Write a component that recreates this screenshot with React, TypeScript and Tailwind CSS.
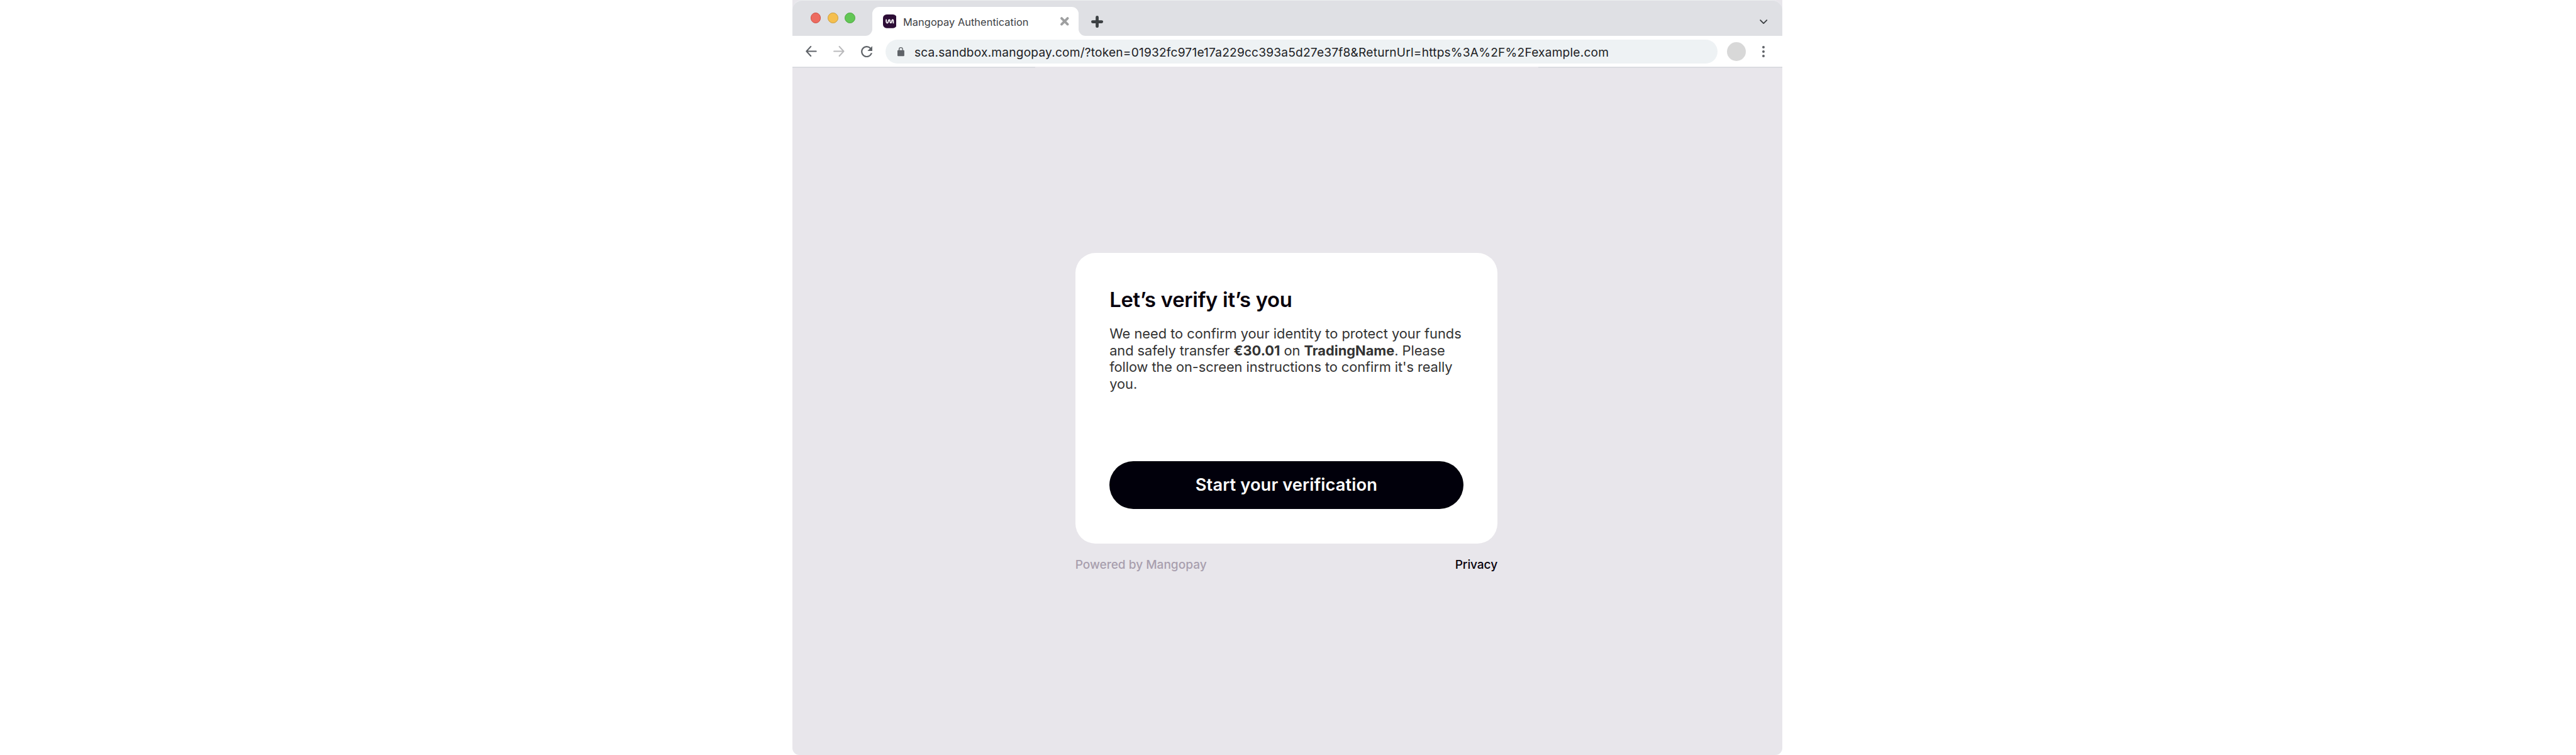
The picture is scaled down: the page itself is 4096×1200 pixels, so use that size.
import React from "react";

function TabStrip() {
  return (
    <div className="flex h-[57.3px] w-full shrink-0 rounded-t-[16px] border-t border-[#eceef0] bg-[#dfe0e4]">
      <div className="mt-[18.5px] ml-[28.7px] flex h-[18px] w-[98.3px] items-center gap-[10.9px]">
        <span className="h-[16.4px] w-[16.4px] rounded-full border border-[#ce5347] bg-[#ed6b60]" />
        <span className="h-[16.4px] w-[16.4px] rounded-full border border-[#c99e3f] bg-[#f5bf4f]" />
        <span className="h-[16.4px] w-[16.4px] rounded-full border border-[#4ea73f] bg-[#62c655]" />
      </div>
      <div className="relative mt-[9.9px] flex h-[46.4px] w-[327.7px] items-center rounded-t-[11px] bg-white pl-[16.4px]">
        <svg className="absolute bottom-0 -left-[10.9px] h-[10.9px] w-[11px]" viewBox="0 0 16 16" preserveAspectRatio="none">
          <path d="M16 0V16H0A16 16 0 0 0 16 0Z" fill="#fff" />
        </svg>
        <svg className="absolute -right-[10.9px] bottom-0 h-[10.9px] w-[11px]" viewBox="0 0 16 16" preserveAspectRatio="none">
          <path d="M0 0V16H16A16 16 0 0 1 0 0Z" fill="#fff" />
        </svg>
        <svg className="h-[21.8px] w-[21.8px] shrink-0" viewBox="0 0 32 32" fill="none">
          <rect width="32" height="32" rx="8.5" fill="#2d0d36" />
          <path
            d="M7.6 11.2V16.4C7.6 20.6 11.1 21 12 17.6L12.8 14.4C13.6 11.4 16.4 11.5 16.4 14.6V16.6C16.4 20.4 19.2 20.7 20 17.6L20.8 14.4C21.6 11.3 24.1 11.5 24.1 15V20.8"
            stroke="#fff"
            strokeWidth="2.6"
          />
        </svg>
        <span className="mt-[1.8px] ml-[10.7px] w-[250px] text-[16.38px] leading-[20px] tracking-[0.05px] whitespace-nowrap text-[#3c4043]">
          Mangopay Authentication
        </span>
        <svg className="absolute top-[16.4px] left-[299px] h-[13.6px] w-[13.6px]" viewBox="0 0 20 20">
          <path d="M3 3L17 17M17 3L3 17" stroke="#9e9fa0" strokeWidth="5.6" strokeLinecap="round" />
        </svg>
      </div>
      <svg className="mt-[23.6px] ml-[20.6px] h-[19.1px] w-[19.1px]" viewBox="0 0 28 28">
        <path d="M14 3.5V24.5M3.5 14H24.5" stroke="#3c4043" strokeWidth="7" strokeLinecap="round" />
      </svg>
      <svg className="mt-[29.6px] mr-[23.8px] ml-auto h-[7.5px] w-[12.4px]" viewBox="0 0 18 11" fill="none">
        <path d="M1.6 1.6L9 9L16.4 1.6" stroke="#3c4043" strokeWidth="2.7" strokeLinecap="round" />
      </svg>
    </div>
  );
}

function Toolbar() {
  return (
    <div className="flex h-[49.2px] w-full shrink-0 items-center bg-white">
      <svg className="ml-[21.3px] h-[17px] w-[17.8px]" viewBox="0 0 26 25" fill="none">
        <path d="M12 1.5L1.8 12.5L12 23.5M2 12.5H24.5" stroke="#5f6368" strokeWidth="2.9" strokeLinecap="round" strokeLinejoin="round" />
      </svg>
      <svg className="ml-[25.7px] h-[17px] w-[17.8px]" viewBox="0 0 26 25" fill="none">
        <path d="M14 1.5L24.2 12.5L14 23.5M24 12.5H1.5" stroke="#bababc" strokeWidth="2.9" strokeLinecap="round" strokeLinejoin="round" />
      </svg>
      <svg className="ml-[25.9px] h-[18.2px] w-[18.4px]" viewBox="4 4 16 16">
        <path
          d="M17.65 6.35A7.958 7.958 0 0 0 12 4c-4.42 0-7.99 3.58-7.99 8s3.57 8 7.99 8c3.73 0 6.84-2.55 7.73-6h-2.08A5.99 5.99 0 0 1 12 18c-3.31 0-6-2.69-6-6s2.69-6 6-6c1.66 0 3.14.69 4.22 1.78L13 11h7V4l-2.35 2.35z"
          fill="#5f6368"
        />
      </svg>
      <div className="ml-[20.5px] flex h-[38.2px] w-[1323px] items-center rounded-full bg-[#eef2f4] pl-[19.1px]">
        <svg className="mt-[1px] h-[14.4px] w-[10.9px] shrink-0" viewBox="0 0 16 21" fill="none">
          <path d="M3.9 9V5A4.1 4.1 0 0 1 12.1 5V9" stroke="#5f6368" strokeWidth="1.9" />
          <rect y="7" width="16" height="14" rx="1.8" fill="#5f6368" />
        </svg>
        <span className="mt-[2px] ml-[16.4px] text-[19.11px] leading-[24px] tracking-[0.21px] whitespace-nowrap text-[#202124]">
          sca.sandbox.mangopay.com/?token=01932fc971e17a229cc393a5d27e37f8&amp;ReturnUrl=https%3A%2F%2Fexample.com
        </span>
      </div>
      <span className="ml-[15px] h-[30px] w-[30px] rounded-full bg-[#d8d8d8]" />
      <div className="ml-[26.6px] flex flex-col gap-[2.7px]">
        <span className="h-[4.1px] w-[4.1px] rounded-full bg-[#5f6368]" />
        <span className="h-[4.1px] w-[4.1px] rounded-full bg-[#5f6368]" />
        <span className="h-[4.1px] w-[4.1px] rounded-full bg-[#5f6368]" />
      </div>
    </div>
  );
}

function VerificationCard() {
  return (
    <main className="flex w-[671.4px] flex-col">
      <section className="flex h-[461.5px] flex-col rounded-[32px] bg-white px-[54.5px] pt-[54px] pb-[54.6px]">
        <h1 className="text-[32.77px] leading-[40px] font-semibold tracking-[-0.27px] whitespace-nowrap text-[#08010c]">
          Let’s verify it’s you
        </h1>
        <p className="mt-[21px] text-[21.84px] leading-[26.66px] whitespace-nowrap text-[#333333]">
          <span className="tracking-[-0.02px]">We need to confirm your identity to protect your funds</span>
          <br />
          <span className="tracking-[-0.08px]">
            and safely transfer <b className="font-bold tracking-normal">€30.01</b> on{" "}
            <b className="font-bold tracking-normal">TradingName</b>. Please
          </span>
          <br />
          <span className="tracking-[-0.085px]">follow the on-screen instructions to confirm it's really</span>
          <br />
          you.
        </p>
        <button className="mt-auto flex h-[76px] w-full shrink-0 items-center justify-center rounded-full bg-[#01000b] text-[27.3px] leading-[34px] font-semibold tracking-[0.08px] whitespace-nowrap text-white">
          Start your verification
        </button>
      </section>
      <footer className="mt-[21.3px] flex justify-between text-[19.11px] leading-[24px] font-medium">
        <span className="tracking-[-0.03px] text-[#a89fae]">Powered by Mangopay</span>
        <span className="tracking-[-0.1px] text-[#08010c]">Privacy</span>
      </footer>
    </main>
  );
}

export default function App() {
  return (
    <div className="h-[1200px] w-[4096px] overflow-hidden bg-white font-['Inter',sans-serif]">
      <div className="ml-[1260.2px] flex h-[1200px] w-[1574.2px] flex-col overflow-hidden rounded-b-[11px] bg-[#e8e6eb]">
        <TabStrip />
        <Toolbar />
        <div className="flex h-[1.4px] shrink-0 justify-between">
          <span className="w-[386px] bg-[#dadce0]" />
          <span className="w-[388px] bg-[#dadce0]" />
        </div>
        <div className="mt-[294.2px] ml-[449.5px]">
          <VerificationCard />
        </div>
      </div>
    </div>
  );
}
